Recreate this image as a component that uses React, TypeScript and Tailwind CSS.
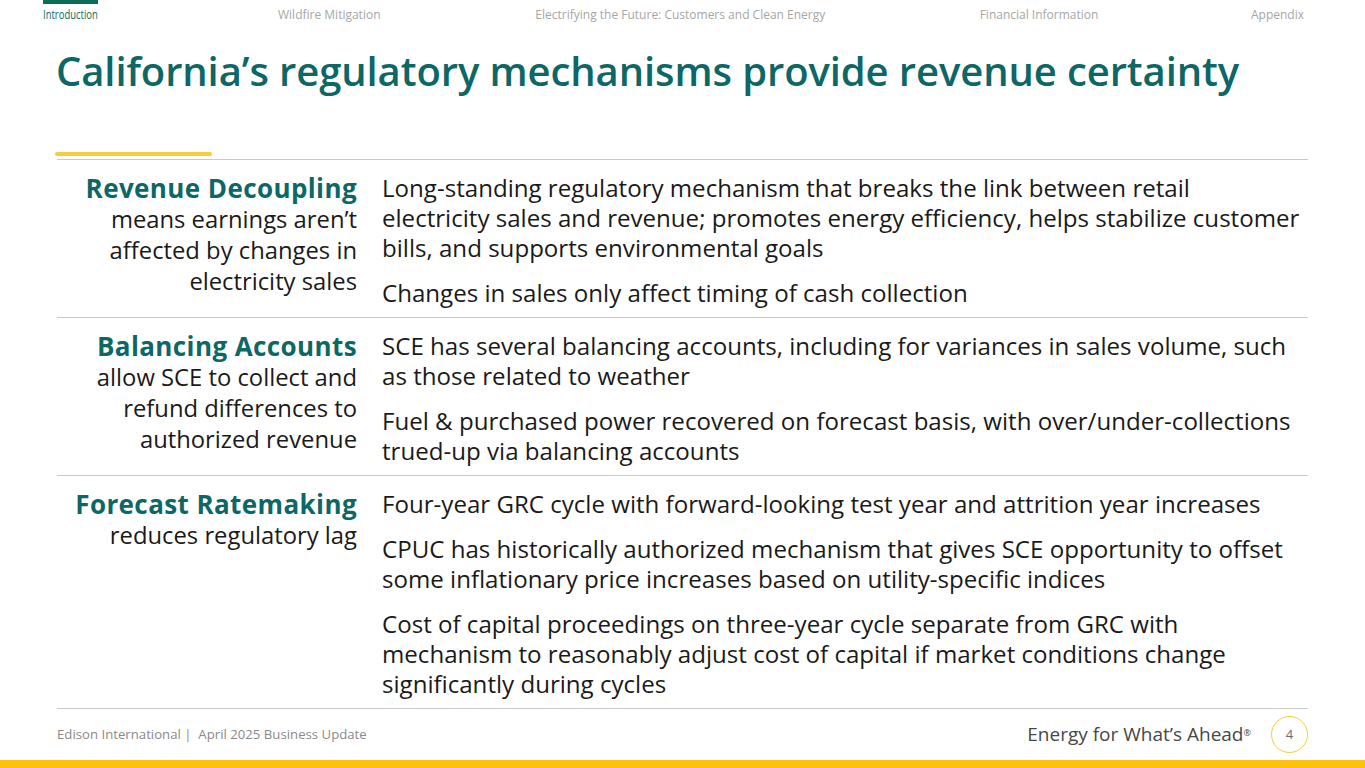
const nav = [
  { label: "Wildfire Mitigation", w: "w-[105px]" },
  { label: "Electrifying the Future: Customers and Clean Energy", w: "w-[292px]" },
  { label: "Financial Information", w: "w-[119px]" },
  { label: "Appendix", w: "w-[52px]" },
];

const rows = [
  {
    title: "Revenue Decoupling",
    sub: ["means earnings aren’t", "affected by changes in", "electricity sales"],
    paras: [
      [
        "Long-standing regulatory mechanism that breaks the link between retail",
        "electricity sales and revenue; promotes energy efficiency, helps stabilize customer",
        "bills, and supports environmental goals",
      ],
      ["Changes in sales only affect timing of cash collection"],
    ],
  },
  {
    title: "Balancing Accounts",
    sub: ["allow SCE to collect and", "refund differences to", "authorized revenue"],
    paras: [
      [
        "SCE has several balancing accounts, including for variances in sales volume, such",
        "as those related to weather",
      ],
      [
        "Fuel & purchased power recovered on forecast basis, with over/under-collections",
        "trued-up via balancing accounts",
      ],
    ],
  },
  {
    title: "Forecast Ratemaking",
    sub: ["reduces regulatory lag"],
    paras: [
      ["Four-year GRC cycle with forward-looking test year and attrition year increases"],
      [
        "CPUC has historically authorized mechanism that gives SCE opportunity to offset",
        "some inflationary price increases based on utility-specific indices",
      ],
      [
        "Cost of capital proceedings on three-year cycle separate from GRC with",
        "mechanism to reasonably adjust cost of capital if market conditions change",
        "significantly during cycles",
      ],
    ],
  },
];

const App = () => {
  return (
    <div className="w-[1365px] h-[768px] bg-white flex flex-col overflow-hidden font-['Open_Sans','Noto_Sans',sans-serif]">
      {/* top nav */}
      <nav className="flex items-start h-[40px] pl-[43px] pr-[62px]">
        <div className="flex flex-col w-[55px]">
          <div className="h-[4px] bg-[#0b6b56]" />
          <span className="mt-[3px] inline-block origin-left scale-x-[0.77] text-[12.3px] leading-[16px] text-[#0b6b5f] whitespace-nowrap">
            Introduction
          </span>
        </div>
        <div className="flex-1 flex justify-between pl-[180px] pt-[7px]">
          {nav.map((n) => (
            <span
              key={n.label}
              className={`${n.w} text-[12px] leading-[16px] text-[#a6a6a6] whitespace-nowrap`}
            >
              {n.label}
            </span>
          ))}
        </div>
      </nav>

      {/* title */}
      <h1 className="pl-[56px] mt-[6px] text-[40px] leading-[50px] font-semibold text-[#0d6766] tracking-[-0.1px] whitespace-nowrap">
        California’s regulatory mechanisms provide revenue certainty
      </h1>

      <div className="ml-[55px] mt-[56px] w-[157px] h-[4px] rounded-full bg-[#f6cd3c]" />

      {/* table */}
      <section className="mx-[57px] mt-[3px] border-t border-[#c9c9c9] flex flex-col">
        {rows.map((r) => (
          <div
            key={r.title}
            className="grid grid-cols-[300px_1fr] gap-x-[25px] border-b border-[#c9c9c9] pt-[13px] pb-[9px]"
          >
            <div className="text-right text-[23.8px] leading-[31px] text-[#1a1a1a]">
              <div className="font-bold text-[26px] tracking-[0.4px] text-[#0d6766] whitespace-nowrap">
                {r.title}
              </div>
              {r.sub.map((s) => (
                <div key={s} className="whitespace-nowrap">{s}</div>
              ))}
            </div>
            <div className="flex flex-col gap-[15px] text-[24.1px] leading-[30px] text-[#1a1a1a]">
              {r.paras.map((p, j) => (
                <p key={j}>
                  {p.map((l) => (
                    <span key={l} className="block whitespace-nowrap">{l}</span>
                  ))}
                </p>
              ))}
            </div>
          </div>
        ))}
      </section>

      {/* footer */}
      <footer className="mx-[57px] flex-1 flex items-center justify-between">
        <span className="text-[13.2px] text-[#8a8a8a]">
          Edison International |&nbsp; April 2025 Business Update
        </span>
        <div className="flex items-center gap-[20px]">
          <span className="text-[19px] text-[#474747]">
            Energy for What’s Ahead<sup className="text-[9px] relative -top-[5px]">®</sup>
          </span>
          <div className="w-[37px] h-[37px] rounded-full border border-[#f2cd45] flex items-center justify-center text-[13px] text-[#6a6a6a]">
            4
          </div>
        </div>
      </footer>
      <div className="h-[8px] bg-[#fdc20e]" />
    </div>
  );
};

export default App;
